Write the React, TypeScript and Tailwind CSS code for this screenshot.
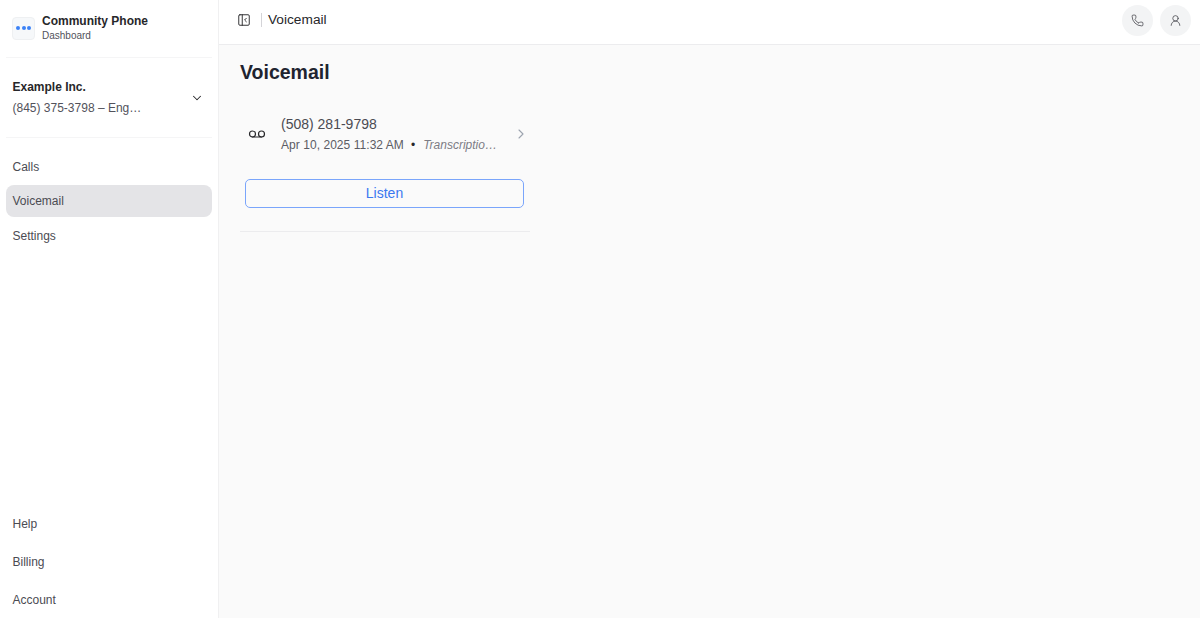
import { ChevronDown, ChevronRight, Phone, UserRound, Voicemail, PanelLeftClose } from 'lucide-react'

function NavItem({ label, active = false }: { label: string; active?: boolean }) {
  return (
    <div className={`flex h-[32px] items-center rounded-lg px-[6.5px] text-[12px] text-[#4b4b52] ${active ? 'bg-[#e4e4e7]' : ''}`}>
      {label}
    </div>
  )
}

export default function App() {
  return (
    <div className="flex h-[618px] w-[1200px] overflow-hidden bg-[#fafafa] font-['Liberation_Sans',Arial,sans-serif] text-[#18181b]">
      {/* Sidebar */}
      <aside className="flex w-[219px] shrink-0 flex-col border-r border-[#f0f0f1] bg-white px-[6px]">
        <div className="flex h-[58px] items-center gap-[7px] border-b border-[#f5f5f6] pb-[1px] pl-[6px]">
          <div className="flex h-[23px] w-[23px] items-center justify-center gap-[1.5px] rounded-[4px] border border-[#eef0f2] bg-[#f6f8fa]">
            <span className="h-[4px] w-[4px] rounded-full bg-[#3b82f6]" />
            <span className="h-[4px] w-[4px] rounded-full bg-[#3b82f6]" />
            <span className="h-[4px] w-[4px] rounded-full bg-[#3b82f6]" />
          </div>
          <div className="flex flex-col">
            <span className="text-[12px] leading-[15px] font-bold text-[#27272a]">Community Phone</span>
            <span className="text-[10px] leading-[14px] text-[#52525b]">Dashboard</span>
          </div>
        </div>

        <div className="flex h-[80px] items-center justify-between border-b border-[#f5f5f6] pr-[8px] pl-[6.5px]">
          <div className="flex flex-col gap-[5px]">
            <span className="text-[12px] leading-[16px] font-bold text-[#27272a]">Example Inc.</span>
            <span className="text-[12px] leading-[16px] text-[#52525b]">(845) 375-3798 – Eng…</span>
          </div>
          <ChevronDown size={14} strokeWidth={1.75} className="text-[#27272a]" />
        </div>

        <nav className="mt-[12.5px] flex flex-col gap-[2.5px]">
          <NavItem label="Calls" />
          <NavItem label="Voicemail" active />
          <NavItem label="Settings" />
        </nav>

        <div className="mt-auto mb-[2px] flex flex-col gap-[6px]">
          <NavItem label="Help" />
          <NavItem label="Billing" />
          <NavItem label="Account" />
        </div>
      </aside>

      {/* Main */}
      <div className="flex min-w-0 flex-1 flex-col">
        <header className="flex h-[45px] shrink-0 items-center justify-between border-b border-[#ececee] bg-white pr-[9px] pb-[4px] pl-[18px]">
          <div className="flex items-center">
            <PanelLeftClose size={14} strokeWidth={1.6} className="text-[#27272a]" />
            <span className="mr-[6px] ml-[10px] h-[14px] w-px bg-[#d4d4d8]" />
            <span className="mt-[1px] text-[13.7px] text-[#27272a]">Voicemail</span>
          </div>
          <div className="flex items-center gap-[7px]">
            <div className="flex h-[31px] w-[31px] items-center justify-center rounded-full bg-[#f3f4f5]">
              <Phone size={13} strokeWidth={1.4} className="text-[#3f3f46]" />
            </div>
            <div className="flex h-[31px] w-[31px] items-center justify-center rounded-full bg-[#f3f4f5]">
              <UserRound size={13} strokeWidth={1.4} className="text-[#3f3f46]" />
            </div>
          </div>
        </header>

        <main className="px-[21px]">
          <h1 className="mt-[14px] text-[19.5px] leading-[26px] font-bold text-[#1f2430]">Voicemail</h1>

          <div className="mt-[24px] w-[290px] border-b border-[#ececee] pb-[23px]">
            <div className="flex h-[50px] items-center pr-[1px] pl-[8px]">
              <Voicemail size={18} strokeWidth={1.6} className="shrink-0 text-[#27272a]" />
              <div className="ml-[15px] flex min-w-0 flex-1 flex-col gap-[4px]">
                <span className="text-[14px] leading-[18px] text-[#4b4b52]">(508) 281-9798</span>
                <div className="flex items-center text-[12px] leading-[16px] text-[#5c5c64]">
                  <span className="tracking-[0.05px]">Apr 10, 2025 11:32 AM</span>
                  <span className="mr-[8px] ml-[7px] text-[#27272a]">•</span>
                  <span className="text-[#7c7c85] italic">Transcriptio…</span>
                </div>
              </div>
              <ChevronRight size={16} strokeWidth={1.6} className="shrink-0 text-[#9ca3af]" />
            </div>
            <button className="mx-[5px] mt-[20px] flex h-[29px] w-[279px] items-center justify-center rounded-[5px] border border-[#7aa5fb] text-[14px] text-[#3b78f0]">
              Listen
            </button>
          </div>
        </main>
      </div>
    </div>
  )
}
